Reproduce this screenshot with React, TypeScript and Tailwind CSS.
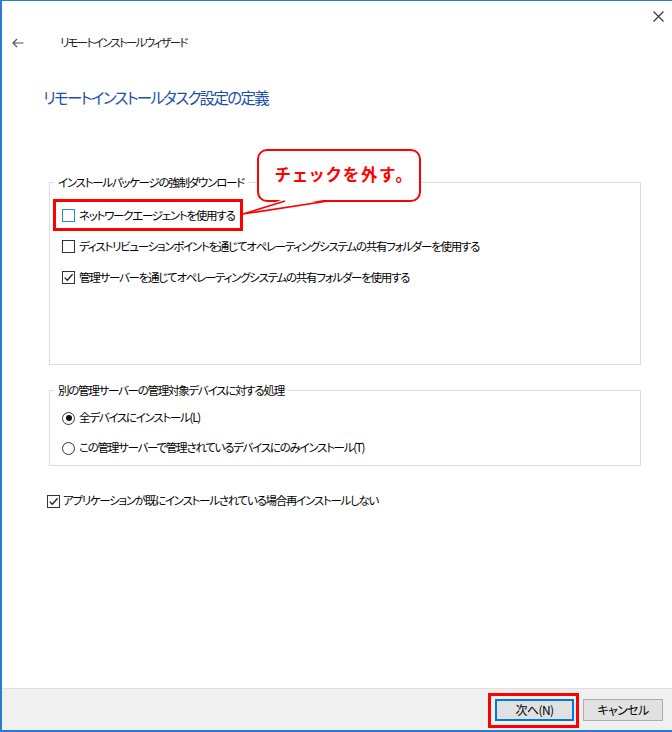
import React from 'react';

const FONT = "font-['Noto_Sans_CJK_JP','Noto_Sans',sans-serif] [font-feature-settings:'palt']";

function CheckBox({ checked, focused }: { checked?: boolean; focused?: boolean }) {
  return (
    <span
      className={`flex h-[13px] w-[13px] flex-none items-center justify-center border bg-white ${
        focused ? 'border-[#2f86d8]' : 'border-[#333333]'
      }`}
    >
      {checked && (
        <svg viewBox="0 0 11 11" className="h-[11px] w-[11px]">
          <path d="M1.6 5.6 L4.3 8.3 L9.6 2.2" fill="none" stroke="#222" strokeWidth="1.3" />
        </svg>
      )}
    </span>
  );
}

function Radio({ selected }: { selected?: boolean }) {
  return (
    <span className="flex h-[13px] w-[13px] flex-none items-center justify-center rounded-full border border-[#333333] bg-white">
      {selected && <span className="h-[6px] w-[6px] rounded-full bg-[#111]" />}
    </span>
  );
}

export default function App() {
  return (
    <div
      className={`relative flex h-[732px] w-[672px] flex-col border-b-2 border-l-2 border-t border-[#2b7bd0] bg-white text-[11.5px] tracking-[-0.11em] text-black ${FONT}`}
    >
      {/* タイトルバー */}
      <div className="flex justify-end pr-[8px] pt-[10px]">
        <svg viewBox="0 0 11 11" className="h-[11px] w-[11px]">
          <path d="M0.5 0.5 L10.5 10.5 M10.5 0.5 L0.5 10.5" stroke="#333" strokeWidth="1.1" />
        </svg>
      </div>

      <div className="mt-[12px] flex h-[18px] items-center pl-[10px]">
        <svg viewBox="0 0 12 10" className="h-[10px] w-[12px] flex-none">
          <path d="M11.5 5 H1 M5 1 L1 5 L5 9" fill="none" stroke="#555" strokeWidth="1.2" />
        </svg>
        <span className="ml-[36px] text-[11.5px] tracking-[-0.15em] text-[#222]">リモートインストールウィザード</span>
      </div>

      <div className="mt-[35px] flex h-[22px] items-center pl-[41px] text-[15.5px] tracking-[-0.11em] text-[#1e4fa6]">
        リモートインストールタスク設定の定義
      </div>

      {/* インストールパッケージ */}
      <fieldset className="ml-[47px] mt-[65px] w-[592px] border border-[#dcdcdc] pb-[71px] pt-[10px]">
        <legend className="ml-[4px] px-[4px] leading-[16px]">インストールパッケージの強制ダウンロード</legend>
        <div className="flex h-[31px] items-center gap-[4px] pl-[12px]">
          <CheckBox focused />
          <span>ネットワークエージェントを使用する</span>
        </div>
        <div className="flex h-[31px] items-center gap-[4px] pl-[12px]">
          <CheckBox />
          <span>ディストリビューションポイントを通じてオペレーティングシステムの共有フォルダーを使用する</span>
        </div>
        <div className="flex h-[31px] items-center gap-[4px] pl-[12px]">
          <CheckBox checked />
          <span>管理サーバーを通じてオペレーティングシステムの共有フォルダーを使用する</span>
        </div>
      </fieldset>

      {/* 別の管理サーバー */}
      <fieldset className="ml-[47px] mt-[17px] w-[592px] border border-[#dcdcdc] pb-[2px] pt-[5px]">
        <legend className="ml-[4px] px-[4px] leading-[16px]">別の管理サーバーの管理対象デバイスに対する処理</legend>
        <div className="flex h-[30px] items-center gap-[4px] pl-[12px]">
          <Radio selected />
          <span>全デバイスにインストール(L)</span>
        </div>
        <div className="flex h-[30px] items-center gap-[4px] pl-[12px]">
          <Radio />
          <span>この管理サーバーで管理されているデバイスにのみインストール(T)</span>
        </div>
      </fieldset>

      <div className="ml-[45px] mt-[25px] flex h-[20px] items-center gap-[3px]">
        <CheckBox checked />
        <span>アプリケーションが既にインストールされている場合再インストールしない</span>
      </div>

      {/* フッター */}
      <div className="mt-auto flex h-[42px] items-start justify-end gap-[9px] border-t border-[#dfdfdf] bg-[#f0f0f0] pr-[9px] pt-[10px]">
        <div className="relative">
          <button
            type="button"
            className="flex h-[22px] w-[79px] items-center justify-center border-2 border-[#0078d7] bg-[#e1e1e1] text-[12px] tracking-[-0.05em]"
          >
            次へ(N)
          </button>
          <span className="absolute -bottom-[7px] -left-[7px] -right-[5px] -top-[6px] border-[3px] border-[#ff0000]" />
        </div>
        <button
          type="button"
          className="flex h-[22px] w-[80px] items-center justify-center border border-[#adadad] bg-[#e1e1e1] text-[12px] tracking-[-0.05em]"
        >
          キャンセル
        </button>
      </div>

      {/* 注釈 */}
      <span className="absolute left-[51px] top-[198px] h-[32px] w-[190px] border-[3px] border-[#ff0000]" />
      <div className="absolute left-[255px] top-[148px] flex h-[53px] w-[164px] items-center justify-center rounded-[10px] border-2 border-[#ff0000] bg-white pb-[3px] pl-[3px] text-[16.5px] font-bold tracking-[0.14em] text-[#ff0000]">
        チェックを外す。
      </div>
      <svg viewBox="0 0 95 24" className="absolute left-[238px] top-[196px] h-[24px] w-[95px]">
        <polygon points="44,2 89,2 3,17" fill="white" />
        <path d="M45 4 L3 17 L88 4" fill="none" stroke="#ff0000" strokeWidth="1.6" />
      </svg>
    </div>
  );
}
